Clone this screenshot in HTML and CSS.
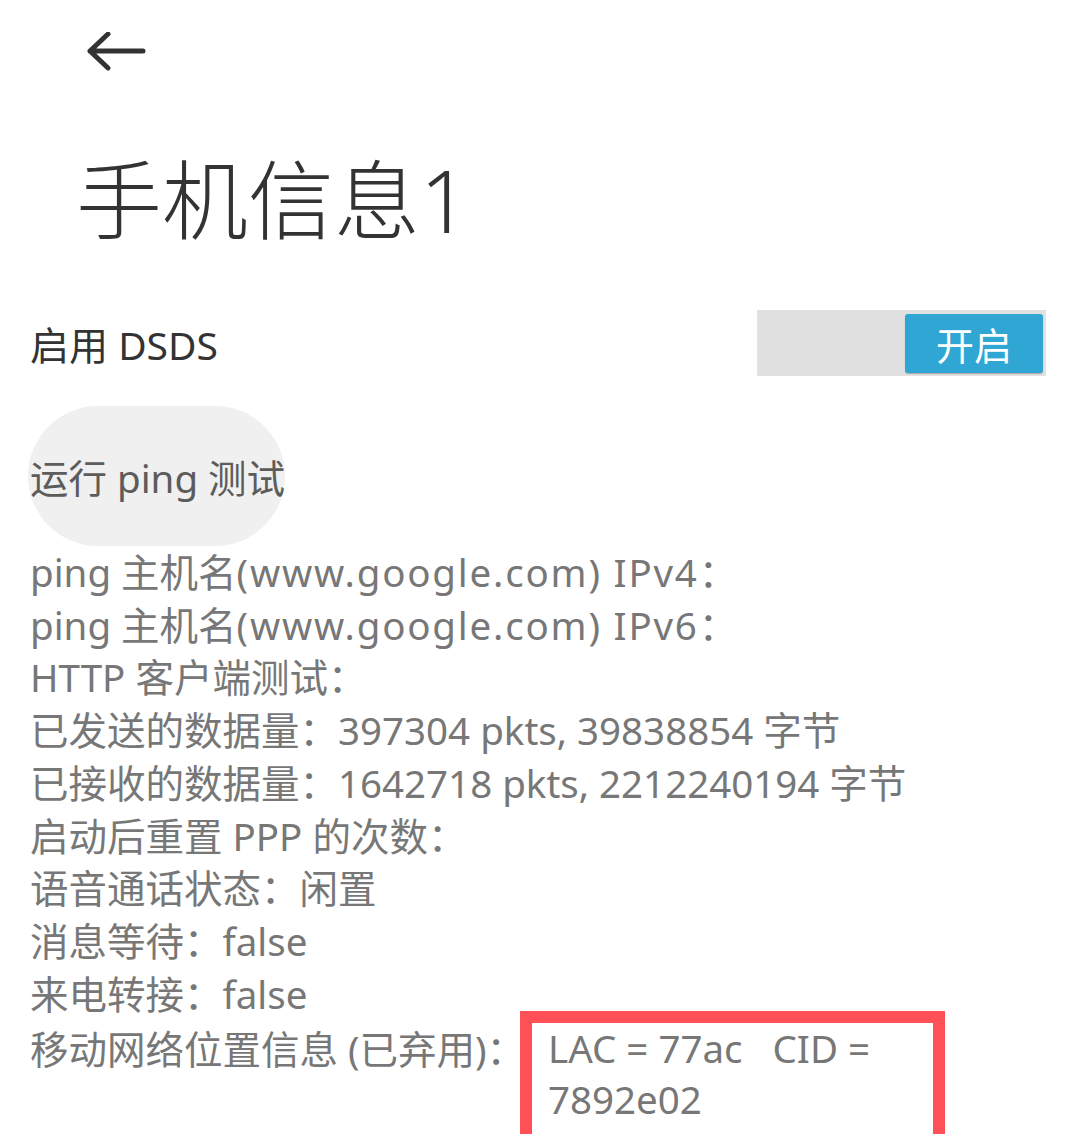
FILE: index.html
```html
<!DOCTYPE html>
<html lang="zh-CN">
<head>
<meta charset="utf-8">
<title>手机信息1</title>
<link rel="stylesheet" href="styles.css">
</head>
<body>
<div class="page">
  <header class="topbar">
    <svg class="back" width="60" height="44" viewBox="0 0 60 44" aria-label="返回">
      <path d="M57 19 H4 M22 2 L4 19 L22 36" fill="none" stroke="#333333" stroke-width="5" stroke-linecap="round" stroke-linejoin="round"/>
    </svg>
  </header>
  <h1 class="title">手机信息1</h1>
  <div class="pref-row">
    <span class="pref-label">启用 DSDS</span>
    <div class="toggle"><span class="thumb">开启</span></div>
  </div>
  <button class="ping-btn">运行 ping 测试</button>
  <div class="info">
    <div class="line">ping 主机名<span class="host">(www.google.com) IPv4</span>：</div>
    <div class="line">ping 主机名<span class="host">(www.google.com) IPv6</span>：</div>
    <div class="line">HTTP 客户端测试：</div>
    <div class="line">已发送的数据量：397304 pkts, 39838854 字节</div>
    <div class="line">已接收的数据量：1642718 pkts, 2212240194 字节</div>
    <div class="line">启动后重置 PPP 的次数：</div>
    <div class="line">语音通话状态：闲置</div>
    <div class="line">消息等待：false</div>
    <div class="line">来电转接：false</div>
    <div class="line loc-row">
      <span class="loc-label">移动网络位置信息 (已弃用)：</span>
      <span class="loc-value">LAC = 77ac   CID = 7892e02</span>
    </div>
  </div>
</div>
</body>
</html>
```

FILE: styles.css
```css
html, body {
  margin: 0;
  padding: 0;
  background: #ffffff;
}
body {
  font-family: "Noto Sans", "Noto Sans CJK SC", sans-serif;
  overflow: hidden;
}
.page {
  width: 1080px;
  height: 1134px;
  overflow: hidden;
}
.topbar {
  height: 100px;
  box-sizing: border-box;
  padding: 32px 0 0 86px;
}
.back {
  display: block;
}
.title {
  margin: 0;
  height: 200px;
  box-sizing: border-box;
  padding: 0 0 0 76px;
  display: flex;
  align-items: center;
  font-size: 86px;
  font-weight: 300;
  line-height: 86px;
  color: #333333;
}
.pref-row {
  height: 86px;
  display: flex;
  align-items: center;
  justify-content: space-between;
  padding: 0 34px 0 30px;
}
.pref-label {
  font-size: 39px;
  color: #333333;
}
.toggle {
  width: 289px;
  height: 66px;
  box-sizing: border-box;
  background: #e1e1e1;
  padding: 4px 3px 3px 0;
  display: flex;
  justify-content: flex-end;
}
.thumb {
  width: 138px;
  height: 59px;
  background: #2fa6d3;
  border-radius: 3px;
  box-shadow: 0 1px 1px rgba(0,0,0,0.25);
  color: #ffffff;
  font-size: 38px;
  display: flex;
  align-items: center;
  justify-content: center;
}
.ping-btn {
  display: block;
  margin: 20px 0 0 28px;
  height: 140px;
  padding: 0 0 0 2px;
  border: none;
  border-radius: 70px;
  background: #f0f0f0;
  font-family: inherit;
  font-size: 38.5px;
  color: #5c5c5c;
  white-space: nowrap;
}
.info {
  margin-top: 0;
  padding-left: 30px;
  color: #777777;
  font-size: 38.5px;
  line-height: 52.7px;
}
.line {
  white-space: nowrap;
}
.host {
  letter-spacing: 1.8px;
}
.loc-row {
  display: flex;
  align-items: flex-start;
  margin-top: 3px;
}
.loc-label {
  width: 490px;
  flex: none;
}
.loc-value {
  white-space: pre-wrap;
  box-sizing: border-box;
  width: 425px;
  height: 134px;
  margin-top: -12px;
  padding: 0 0 0 16px;
  border: 12px solid #ff4f57;
  border-bottom-width: 11px;
  line-height: 51px;
}
```
